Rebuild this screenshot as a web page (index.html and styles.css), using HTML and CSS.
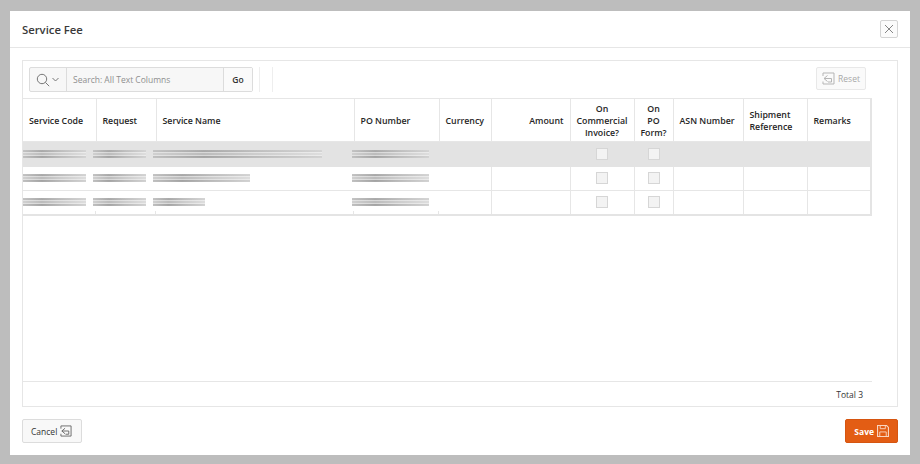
FILE: index.html
```html
<!DOCTYPE html>
<html lang="en">
<head>
<meta charset="utf-8">
<title>Service Fee</title>
<link rel="stylesheet" href="styles.css">
</head>
<body>
<div class="dialog">
  <header class="dialog-head">
    <h1 class="dialog-title">Service Fee</h1>
    <button class="close" aria-label="Close">
      <svg width="10" height="10" viewBox="0 0 10 10"><path d="M1 1l8 8M9 1l-8 8" fill="none" stroke="#777" stroke-width=".9"/></svg>
    </button>
  </header>
  <main class="dialog-body">
    <section class="region">
      <div class="toolbar">
        <div class="search">
          <span class="search-icon">
            <svg width="24" height="14" viewBox="0 0 24 14"><circle cx="6" cy="6" r="4.7" fill="none" stroke="#777"/><path d="M9.400 9.400l3.800 3.800" stroke="#777" fill="none"/><path d="M16.500 5l3 3 3-3" stroke="#777" fill="none"/></svg>
          </span>
          <span class="search-input">Search: All Text Columns</span>
          <span class="go">Go</span>
        </div>
        <span class="sep"></span>
        <span class="sep sep2"></span>
        <button class="reset">
          <svg width="13" height="13" viewBox="0 0 13 13"><path d="M1 4V1h11v11H1V9.500" fill="none" stroke="#b5b5b5"/><path d="M5.500 3.500l-3.500 3 3.500 3M2 6.500h7.500v3.500H6" fill="none" stroke="#b5b5b5"/></svg>
          Reset
        </button>
      </div>
      <div class="grid-wrap">
        <table class="grid">
          <colgroup>
            <col class="c1"><col class="c2"><col class="c3"><col class="c4"><col class="c5"><col class="c6"><col class="c7"><col class="c8"><col class="c9"><col class="c10"><col class="c11">
          </colgroup>
          <thead>
            <tr>
              <th>Service Code</th><th>Request</th><th>Service Name</th><th>PO Number</th><th>Currency</th>
              <th class="right">Amount</th><th class="center">On Commercial Invoice?</th><th class="center">On<br>PO<br>Form?</th>
              <th>ASN Number</th><th>Shipment Reference</th><th>Remarks</th>
            </tr>
          </thead>
          <tbody>
            <tr class="selected">
              <td><span class="smear s-code"></span></td><td><span class="smear s-req"></span></td><td><span class="smear s-name1"></span></td><td><span class="smear s-po"></span></td>
              <td></td><td></td><td class="center"><span class="check"></span></td><td class="center"><span class="check"></span></td><td></td><td></td><td></td>
            </tr>
            <tr>
              <td><span class="smear s-code"></span></td><td><span class="smear s-req"></span></td><td><span class="smear s-name2"></span></td><td><span class="smear s-po"></span></td>
              <td></td><td></td><td class="center"><span class="check"></span></td><td class="center"><span class="check"></span></td><td></td><td></td><td></td>
            </tr>
            <tr>
              <td><span class="smear s-code"></span></td><td><span class="smear s-req"></span></td><td><span class="smear s-name3"></span></td><td><span class="smear s-po"></span></td>
              <td></td><td></td><td class="center"><span class="check"></span></td><td class="center"><span class="check"></span></td><td></td><td></td><td></td>
            </tr>
          </tbody>
        </table>
      </div>
      <div class="grid-foot">Total 3</div>
    </section>
  </main>
  <footer class="dialog-foot">
    <button class="btn">Cancel
      <svg width="12" height="12" viewBox="0 0 13 13"><path d="M1 4V1h11v11H1V9.500" fill="none" stroke="#666"/><path d="M5.500 3.500l-3.500 3 3.500 3M2 6.500h7.500v3.500H6" fill="none" stroke="#666"/></svg>
    </button>
    <button class="btn btn-save">Save
      <svg width="12" height="12" viewBox="0 0 13 13"><path d="M.6.600h9.800l2 2v9.800H.6z" fill="none" stroke="#f9d5c0" stroke-width="1.200"/><path d="M3.500 1v3h5.500V1M3 12.500V7.500h7v5" fill="none" stroke="#f9d5c0"/></svg>
    </button>
  </footer>
</div>
</body>
</html>
```
FILE: styles.css
```css
* { box-sizing: border-box; }
html, body { margin: 0; height: 100%; }
body {
  background: #bdbdbd;
  padding: 11px 10px 9px;
  font-family: "Open Sans", "Noto Sans", sans-serif;
  color: #262626;
  overflow: hidden;
}
button { font-family: inherit; cursor: default; }
.dialog {
  height: 444px;
  background: #fff;
  display: flex;
  flex-direction: column;
}
.dialog-head {
  height: 37px;
  flex: none;
  border-bottom: 1px solid #e6e6e6;
  display: flex;
  align-items: center;
  justify-content: space-between;
  padding: 0 12px;
}
.dialog-title { margin: 0; font-size: 11.300px; font-weight: 600; color: #3a3a3a; }
.close {
  width: 18px; height: 18px; padding: 0;
  border: 1px solid #d4d4d4; border-radius: 2px;
  background: #fbfbfb;
  display: flex; align-items: center; justify-content: center;
}
.dialog-body { flex: none; padding: 12px 12px 0; }
.region {
  height: 347px;
  border: 1px solid #e6e6e6;
  display: flex; flex-direction: column;
}
.toolbar {
  height: 37px; flex: none;
  display: flex; align-items: flex-start;
  padding: 6px 31px 0 6px;
}
.search {
  width: 224px; height: 25px;
  border: 1px solid #dcdcdc; border-radius: 2px;
  background: #f7f7f7;
  display: flex; align-items: stretch;
  font-size: 8.500px;
}
.search-icon { width: 37px; display: flex; align-items: center; justify-content: center; border-right: 1px solid #dcdcdc; }
.search-input { flex: 1; display: flex; align-items: center; padding-left: 6px; color: #8f8f8f; }
.go { width: 29px; display: flex; align-items: center; justify-content: center; border-left: 1px solid #dcdcdc; font-weight: 600; color: #333; background: #fafafa; }
.sep { width: 1px; height: 25px; background: #eee; margin-left: 6px; }
.sep2 { margin-left: 12px; }
.reset {
  margin-left: auto;
  width: 50px; height: 23px; padding: 0;
  border: 1px solid #e8e8e8; border-radius: 2px;
  background: #fafafa; color: #a8a8a8;
  font-size: 8.500px;
  display: flex; align-items: center; justify-content: center; gap: 3px;
}
.grid-wrap { width: 849px; flex: none; border-bottom: 2px solid #e4e4e4; border-right: 2px solid #e4e4e4; border-top: 1px solid #e6e6e6; }
.grid { width: 100%; border-collapse: collapse; table-layout: fixed; font-size: 8.800px; }
.c1 { width: 73px; } .c2 { width: 60px; } .c3 { width: 198px; } .c4 { width: 85px; }
.c5 { width: 52px; } .c6 { width: 79px; } .c7 { width: 64px; } .c8 { width: 39px; }
.c9 { width: 70px; } .c10 { width: 64px; } .c11 { width: 63px; }
th, td { border-right: 1px solid #e6e6e6; border-bottom: 1px solid #e6e6e6; padding: 0 6px; }
th:last-child, td:last-child { border-right: 0; }
tr:last-child td { border-bottom: 0; }
th { height: 42px; padding-top: 3px; font-weight: 600; text-align: left; line-height: 12px; color: #262626; }
td { height: 24px; }
td:nth-child(-n+4) { border-right-color: transparent; }
tr:last-child td:nth-child(-n+4) {
  background: linear-gradient(#e6e6e6, #e6e6e6) right bottom / 1px 3px no-repeat;
}
.right { text-align: right; }
th.center, td.center { text-align: center; padding: 0 4px; }
th.center { padding-top: 3px; }
.selected td { height: 25px; background: #e3e3e3; border-color: #e3e3e3; }
.check {
  display: block; width: 12px; height: 12px; margin: 0 auto;
  border: 1px solid #d6d6d6; background: #f3f3f3;
}
.smear {
  display: block; height: 8px; margin-left: -10px;
  background:
    linear-gradient(to right, rgba(255,255,255,.3), rgba(255,255,255,0) 30%, rgba(255,255,255,.25) 60%, rgba(255,255,255,.5)),
    linear-gradient(to bottom, #e0e0e0 0, #777 1px, #d8d8d8 2px 3px, #a0a0a0 4px, #d8d8d8 5px 6px, #6e6e6e 7px, #e0e0e0 8px);
  filter: blur(.3px);
}
.s-code { width: 63px; margin-left: -6px; }
.s-req { width: 53px; }
.s-name1 { width: 169px; }
.s-name2 { width: 97px; }
.s-name3 { width: 52px; }
.s-po { width: 77px; margin-left: -9px; }
.grid-foot {
  margin-top: auto;
  width: 849px; height: 25px; flex: none;
  border-top: 1px solid #e6e6e6;
  font-size: 8.500px; color: #333;
  display: flex; align-items: center; justify-content: flex-end;
  padding-right: 9px;
}
.dialog-foot {
  flex: 1;
  display: flex; align-items: flex-start; justify-content: space-between;
  padding: 12px 12px 0;
}
.btn {
  height: 24px; padding: 0 9px 0 8px;
  border: 1px solid #dcdcdc; border-radius: 2px;
  background: #f8f8f8; color: #333;
  font-size: 8.500px;
  display: flex; align-items: center; gap: 3px;
}
.btn-save {
  padding: 0 8px;
  background: #e35d14; border-color: #d65510; color: #fff; font-weight: 700;
}
```
